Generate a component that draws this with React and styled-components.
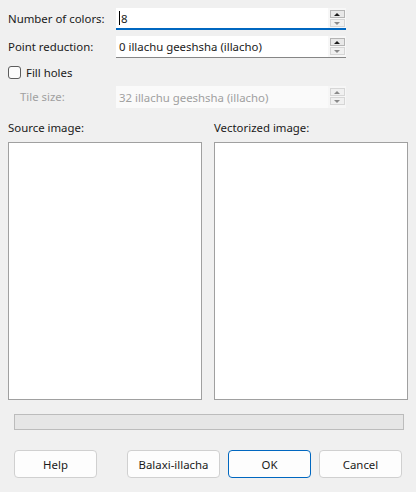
import React from "react";
import styled, { createGlobalStyle, css } from "styled-components";

const Global = createGlobalStyle`
  html, body { margin: 0; padding: 0; background: #f0f0f0; }
  body { font-family: "Noto Sans", "Open Sans", sans-serif; font-size: 11.4px; color: #1a1a1a; }
`;

const Dialog = styled.div`
  width: 416px;
  height: 492px;
  box-sizing: border-box;
  padding: 8px 8px 0 8px;
  display: flex;
  flex-direction: column;
  background: #f0f0f0;
`;

const FieldRow = styled.div`
  display: grid;
  grid-template-columns: 108px 230px;
  align-items: center;
  height: 22px;
  margin-top: ${(p) => p.$mt || 0}px;
`;

const Label = styled.div`
  padding-left: ${(p) => (p.$indent ? 12 : 0)}px;
  color: ${(p) => (p.$disabled ? "#a0a0a0" : "#1a1a1a")};
  white-space: nowrap;
  line-height: 16px;
`;

const Spin = styled.div`
  display: flex;
  height: 22px;
  box-sizing: border-box;
  background: ${(p) => (p.$disabled ? "#f6f6f6" : "#f7f7f7")};
  border-bottom: ${(p) =>
    p.$disabled ? "none" : p.$focused ? "2px solid #0067c0" : "1px solid #868686"};
`;

const Input = styled.div`
  flex: 1;
  background: ${(p) => (p.$disabled ? "#fafafa" : "#ffffff")};
  color: ${(p) => (p.$disabled ? "#a0a0a0" : "#1a1a1a")};
  padding-left: 3px;
  display: flex;
  align-items: center;
  white-space: nowrap;
  overflow: hidden;
`;

const Caret = styled.span`
  display: inline-block;
  width: 1px;
  height: 14px;
  background: #000;
  margin-right: 1px;
`;

const Buttons = styled.div`
  width: 18px;
  display: flex;
  flex-direction: column;
  align-items: center;
  padding-top: 2px;
  gap: 1px;
`;

const Arrow = styled.div`
  width: 15px;
  height: 8px;
  box-sizing: border-box;
  border: 1px solid ${(p) => (p.$active ? "#b4b4b4" : "#d6d6d6")};
  background: ${(p) => (p.$active ? "#e8e8e8" : "#f0f0f0")};
  display: flex;
  align-items: center;
  justify-content: center;
  &::after {
    content: "";
    width: 0;
    height: 0;
    border-left: 3.5px solid transparent;
    border-right: 3.5px solid transparent;
    ${(p) =>
      p.$down
        ? css`border-top: 3px solid ${p.$dark ? "#1a1a1a" : "#8a8a8a"};`
        : css`border-bottom: 3px solid ${p.$dark ? "#1a1a1a" : "#8a8a8a"};`}
  }
`;

const CheckRow = styled.label`
  display: flex;
  align-items: center;
  gap: 5px;
  height: 24px;
  margin-top: 2px;
`;

const Box = styled.span`
  width: 13px;
  height: 13px;
  box-sizing: border-box;
  border: 1px solid #5c5c5c;
  border-radius: 3px;
  background: #fbfbfb;
`;

const Panels = styled.div`
  display: grid;
  grid-template-columns: 194px 194px;
  column-gap: 12px;
  margin-top: 12px;
`;

const Panel = styled.div`
  display: flex;
  flex-direction: column;
`;

const PanelTitle = styled.div`
  height: 16px;
  line-height: 16px;
  margin-bottom: 6px;
`;

const ImageBox = styled.div`
  height: 258px;
  box-sizing: border-box;
  border: 1px solid #a0a0a0;
  background: #ffffff;
`;

const Progress = styled.div`
  margin: 14px 4px 0 6px;
  height: 16px;
  box-sizing: border-box;
  border: 1px solid #bcbcbc;
  background: #e6e6e6;
`;

const Footer = styled.div`
  display: flex;
  margin: 20px 0 0 6px;
  gap: 8px;
`;

const Btn = styled.button`
  width: ${(p) => p.$w || 83}px;
  height: 28px;
  box-sizing: border-box;
  margin-right: ${(p) => p.$mr || 0}px;
  font-family: inherit;
  font-size: 11.4px;
  color: #1a1a1a;
  background: #fdfdfd;
  border: 1px solid ${(p) => (p.$primary ? "#0067c0" : "#d0d0d0")};
  border-radius: 4px;
  padding: 0;
`;

function SpinBox({ value, focused, disabled, caret }) {
  return (
    <Spin $focused={focused} $disabled={disabled}>
      <Input $disabled={disabled}>
        {caret && <Caret />}
        {value}
      </Input>
      <Buttons>
        <Arrow $active={!disabled} $dark={!disabled} />
        <Arrow $down $active={false} />
      </Buttons>
    </Spin>
  );
}

export default function App() {
  return (
    <>
      <Global />
      <Dialog>
        <FieldRow>
          <Label>Number of colors:</Label>
          <SpinBox value="8" focused caret />
        </FieldRow>
        <FieldRow $mt={6}>
          <Label>Point reduction:</Label>
          <SpinBox value="0 illachu geeshsha (illacho)" />
        </FieldRow>
        <CheckRow>
          <Box />
          <span>Fill holes</span>
        </CheckRow>
        <FieldRow $mt={2}>
          <Label $indent $disabled>Tile size:</Label>
          <SpinBox value="32 illachu geeshsha (illacho)" disabled />
        </FieldRow>
        <Panels>
          <Panel>
            <PanelTitle>Source image:</PanelTitle>
            <ImageBox />
          </Panel>
          <Panel>
            <PanelTitle>Vectorized image:</PanelTitle>
            <ImageBox />
          </Panel>
        </Panels>
        <Progress />
        <Footer>
          <Btn $mr={22}>Help</Btn>
          <Btn $w={93}>Balaxi-illacha</Btn>
          <Btn $primary>OK</Btn>
          <Btn>Cancel</Btn>
        </Footer>
      </Dialog>
    </>
  );
}
